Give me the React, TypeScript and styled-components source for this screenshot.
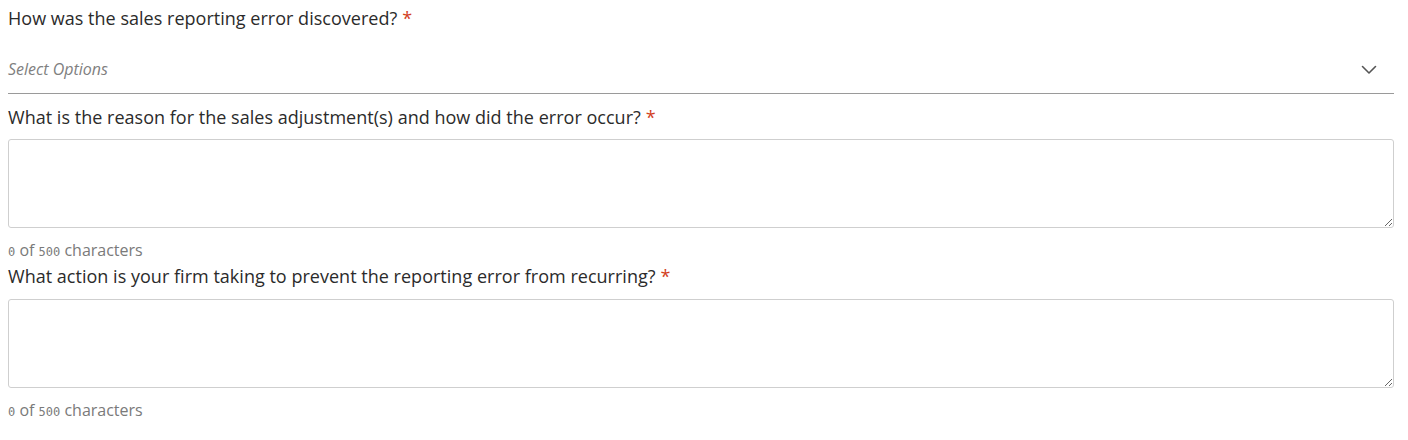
import React from "react";
import styled, { createGlobalStyle } from "styled-components";

const Global = createGlobalStyle`
  html, body { margin: 0; padding: 0; background: #fff; }
  body { font-family: "Open Sans", "Noto Sans", sans-serif; color: #333; }
  * { box-sizing: border-box; }
`;

const Form = styled.div`
  display: flex;
  flex-direction: column;
  padding: 6px 14px 0 8px;
`;

const Label = styled.label`
  display: block;
  font-size: 18px;
  line-height: 24px;
  color: #2b2b2b;
  letter-spacing: 0.02px;
`;

const Required = styled.span`
  color: #d2401e;
  margin-left: 5px;
`;

const Select = styled.div`
  display: flex;
  align-items: center;
  justify-content: space-between;
  height: 45px;
  margin-top: 19px;
  border-bottom: 1px solid #9a9a9a;
  cursor: pointer;
`;

const Placeholder = styled.span`
  font-size: 16px;
  font-style: italic;
  color: #808080;
  margin-top: -4px;
`;

const Chevron = styled.svg`
  width: 16px;
  height: 10px;
  margin-right: 17px;
  margin-top: -2px;
`;

const Field = styled.div<{ $gap: number }>`
  display: flex;
  flex-direction: column;
  margin-top: ${(p) => p.$gap}px;
`;

const TextArea = styled.textarea<{ $top: number }>`
  display: block;
  width: 100%;
  height: 89px;
  margin-top: ${(p) => p.$top}px;
  border: 1px solid #cfcfcf;
  border-radius: 3px;
  font-family: inherit;
  font-size: 14px;
  resize: vertical;
  outline: none;
`;

const Counter = styled.div`
  font-size: 16px;
  line-height: 20px;
  color: #7a7a7a;
  margin-top: 12px;
`;

const Num = styled.span`
  font-family: "DejaVu Sans Mono", monospace;
  font-size: 12px;
`;

export default function App() {
  return (
    <>
      <Global />
      <Form>
        <Label>
          How was the sales reporting error discovered?<Required>*</Required>
        </Label>
        <Select>
          <Placeholder>Select Options</Placeholder>
          <Chevron viewBox="0 0 16 10" fill="none">
            <path d="M1.5 1.5 L8 8 L14.5 1.5" stroke="#555" strokeWidth="1.6" strokeLinecap="round" strokeLinejoin="round" />
          </Chevron>
        </Select>
        <Field $gap={11}>
          <Label>
            What is the reason for the sales adjustment(s) and how did the error occur?<Required>*</Required>
          </Label>
          <TextArea $top={10} />
          <Counter>
            <Num>0</Num> of <Num>500</Num> characters
          </Counter>
        </Field>
        <Field $gap={2}>
          <Label>
            What action is your firm taking to prevent the reporting error from recurring?<Required>*</Required>
          </Label>
          <TextArea $top={11} />
          <Counter>
            <Num>0</Num> of <Num>500</Num> characters
          </Counter>
        </Field>
      </Form>
    </>
  );
}
